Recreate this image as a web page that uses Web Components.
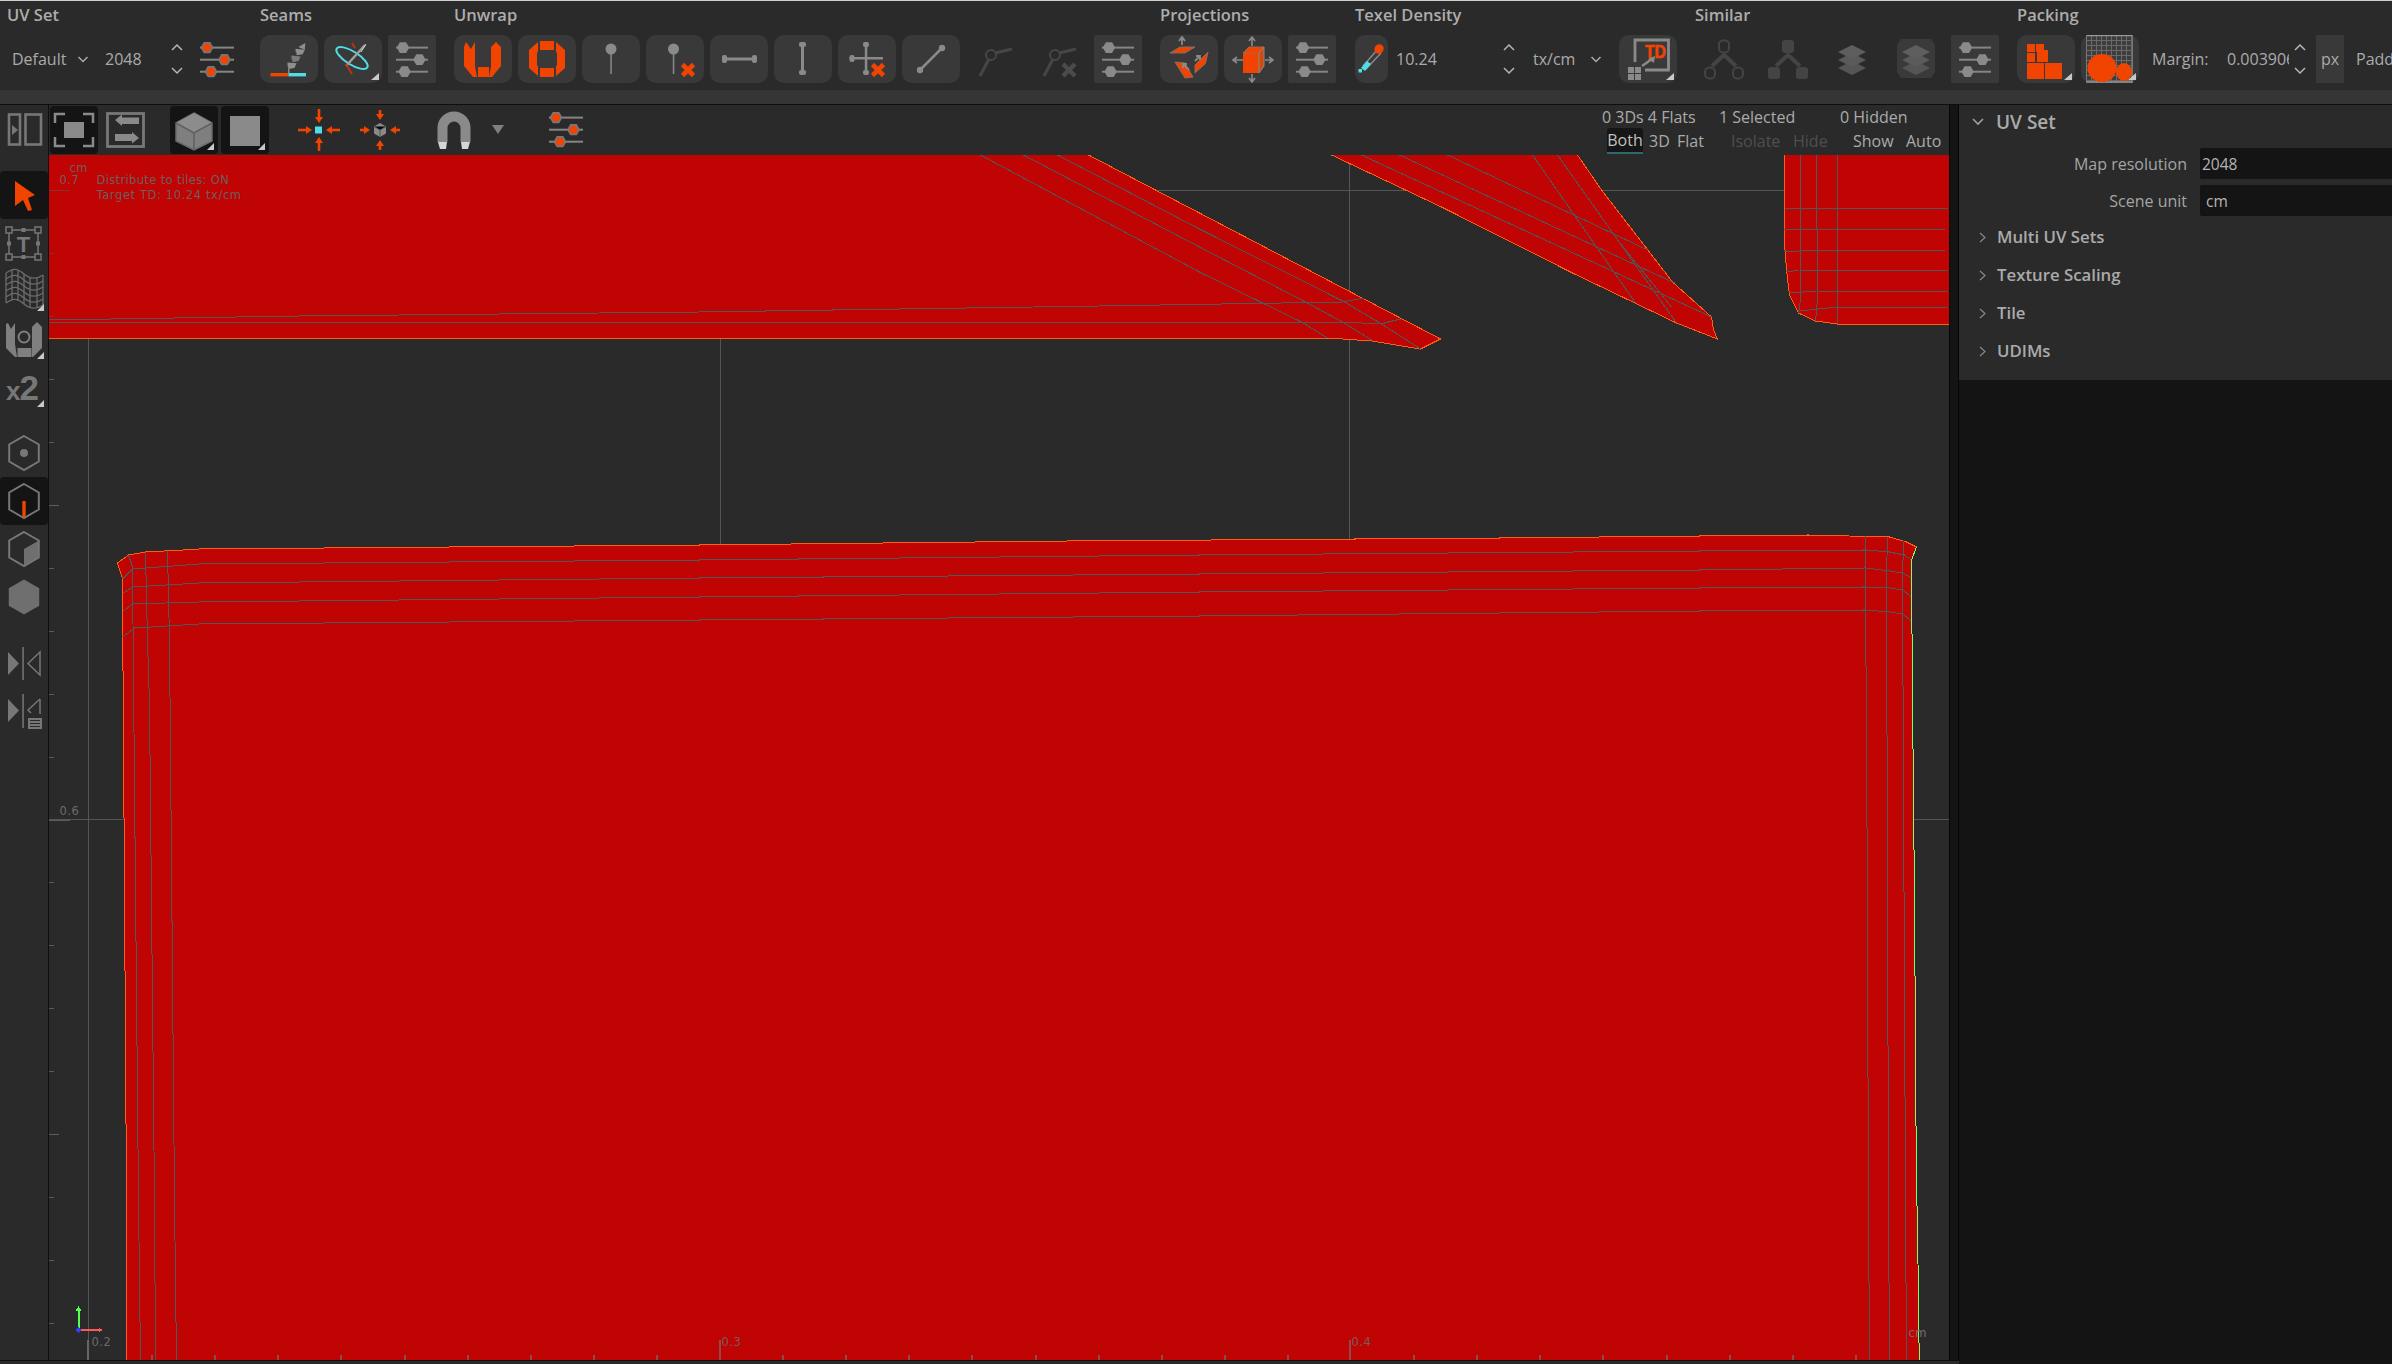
<!DOCTYPE html>
<html><head><meta charset="utf-8"><title>UV</title>
<style>
html,body{margin:0;padding:0;background:#2a2a2a;overflow:hidden;width:2392px;height:1364px}
body{font-family:"Open Sans","Liberation Sans",sans-serif;color:#aaa}
</style></head><body>
<uv-app></uv-app>
<script>
const G='#8a8a8a',O='#f04400',C='#4fdde8',D='#444',L='#777';
const hexFlat=(x,y,r,f)=>`<polygon points="${x-r},${y} ${x-r/2},${y-r*.87} ${x+r/2},${y-r*.87} ${x+r},${y} ${x+r/2},${y+r*.87} ${x-r/2},${y+r*.87}" fill="${f}"/>`;
const hexPt=(x,y,r,attrs)=>`<polygon points="${x},${y-r} ${x+r*.87},${y-r/2} ${x+r*.87},${y+r/2} ${x},${y+r} ${x-r*.87},${y+r/2} ${x-r*.87},${y-r/2}" ${attrs}/>`;
const lines=(x0=8,x1=40,c='#858585')=>[12.6,24.7,36.7].map(y=>`<rect x="${x0}" y="${y-1}" width="${x1-x0}" height="2" fill="${c}"/>`).join('');
const xMark=(x,y,s=6.5)=>`<path d="M${x-s} ${y-s}L${x+s} ${y+s}M${x+s} ${y-s}L${x-s} ${y+s}" stroke="${O}" stroke-width="4.6" fill="none"/>`;
const pinHead=(x,y)=>`<ellipse cx="${x}" cy="${y}" rx="5.5" ry="5.5" fill="${G}"/><rect x="${x-.7}" y="${y}" width="1.5" height="25" fill="${G}"/>`;
const dimLoop=(c)=>`<circle cx="25" cy="20" r="5" fill="none" stroke="${c}" stroke-width="2"/><path d="M23 24L14 41M29 18L46 14" stroke="${c}" stroke-width="3" fill="none"/>`;
const arrowSet=(cx,cy,far,near,c)=>{
 const a=(x1,y1,x2,y2)=>{const dx=Math.sign(x2-x1),dy=Math.sign(y2-y1);
  return `<path d="M${x1} ${y1}L${x2-dx*4} ${y2-dy*4}" stroke="${c}" stroke-width="2.6"/><polygon points="${x2},${y2} ${x2-dx*6-dy*4},${y2-dy*6-dx*4} ${x2-dx*6+dy*4},${y2-dy*6+dx*4}" fill="${c}"/>`};
 return a(cx,cy-far,cx,cy-near)+a(cx,cy+far,cx,cy+near)+a(cx-far,cy,cx-near,cy)+a(cx+far,cy,cx+near,cy)};
const ICONS={
 slidersO:`${lines(8,42)}${[[15,12.6],[32.5,24.7],[19,36.7]].map(([x,y])=>hexFlat(x,y,6.5,'#777')+`<circle cx="${x}" cy="${y}" r="4" fill="${O}"/>`).join('')}`,
 sliders:`${lines()}${hexFlat(15,12.6,6.2,G)}${hexFlat(31.4,24.7,6.2,G)}${hexFlat(16.6,36.7,6.2,G)}`,
 seam:`<rect x="10.500" y="38" width="18" height="3.400" fill="${O}"/><rect x="28.500" y="38" width="17.500" height="3.400" fill="${C}"/>
  <rect x="28" y="30" width="1.500" height="8" fill="#888"/>
  <g transform="translate(28.500 34) rotate(31)">${[0,-8,-16].map((d,i)=>`<polygon points="0,${d} 4.500,${d-4} 4,${d-9} -4.500,${d-5}" fill="${i%2?'#7a7a7a':'#8f8f8f'}"/><polygon points="0,${d} -4.500,${d-5} -4,${d-3} " fill="#5f5f5f"/>`).join('')}<polygon points="-3,-24 4,-25 1,-31" fill="#8f8f8f"/></g>`,
 cut:`<ellipse cx="28" cy="23" rx="18" ry="6.500" transform="rotate(32 28 23)" fill="none" stroke="${C}" stroke-width="2"/><path d="M41 10L22 31" stroke="#a0a0a0" stroke-width="2.400"/><path d="M42 9L37 17" stroke="#cfcfcf" stroke-width="1"/><path d="M28 8L31 13M22 29L28 39" stroke="#c63010" stroke-width="1.800"/>`,
 u:`<polygon points="10,12 12,7 17,14 21,7 21,31 23,42 19,42 10,31" fill="${O}"/><polygon points="37,12 42,7 47,12 47,31 38,42 35,42 37,31" fill="${O}"/><rect x="24" y="32" width="11" height="10" fill="${O}"/>`,
 o:`<rect x="22" y="6" width="14" height="9" fill="${O}"/><rect x="22" y="33" width="14" height="9" fill="${O}"/><polygon points="11,15 20,7 20,17 19,18 19,30 20,31 20,41 11,33" fill="${O}"/><polygon points="47,15 38,7 38,17 39,18 39,30 38,31 38,41 47,33" fill="${O}"/>`,
 pin:pinHead(29,14),
 pinx:pinHead(27.500,14)+xMark(42,35,5.5),
 edgeH:`<rect x="12" y="22.500" width="35" height="3" fill="${G}"/><rect x="12" y="20" width="5" height="8" rx="2" fill="${G}"/><rect x="42" y="20" width="5" height="8" rx="2" fill="${G}"/>`,
 edgeV:`<rect x="27" y="7" width="3" height="33" fill="${G}"/><rect x="25" y="7" width="7" height="5" rx="2" fill="${G}"/><rect x="25" y="35" width="7" height="5" rx="2" fill="${G}"/>`,
 cross:`<rect x="26.800" y="7" width="2.500" height="33" fill="${G}"/><rect x="11.500" y="22" width="33.500" height="2.500" fill="${G}"/><rect x="25" y="7" width="6" height="5" rx="2" fill="${G}"/><rect x="25" y="35" width="6" height="5" rx="2" fill="${G}"/><rect x="11.500" y="20" width="5" height="7" rx="2" fill="${G}"/>${xMark(40,35,5.5)}`,
 diag:`<path d="M18 35L40 13" stroke="${G}" stroke-width="2.500"/><circle cx="18" cy="35" r="3.200" fill="${G}"/><circle cx="40" cy="13" r="3.200" fill="${G}"/>`,
 dim1:dimLoop('#464646'),
 dim2:dimLoop('#464646')+`<path d="M33 29L45 41M45 29L33 41" stroke="#4b4b4b" stroke-width="4.500"/>`,
 tri:`<polygon points="10,18 20,12 35,12 25,18" fill="${O}" stroke="#8a6a60"/><polygon points="15,27 25,28 33,42 25,43" fill="${O}" stroke="#8a6a60"/><polygon points="35,30 48,17 45.500,28.500 35,38" fill="${O}" stroke="#8a6a60"/>
  <path d="M22 10V3M19 6L22 2L25 6" stroke="${G}" stroke-width="1.800" fill="none"/><path d="M29 35L23 29M23 33V29H27" stroke="${G}" stroke-width="1.800" fill="none"/><path d="M35 26L40 21M36 21H40V25" stroke="${G}" stroke-width="1.800" fill="none"/>`,
 box:`<rect x="19" y="18" width="16" height="20" fill="${O}"/><polygon points="19,18 25,12 40,12 35,18" fill="${O}" stroke="#a06a50"/><polygon points="35,18 40,12 40,31 35,38" fill="#d04a10" stroke="#8a8a8a"/>
  <path d="M28 11V3M25 6L28 2L31 6M28 39V46M25 43L28 47L31 43M19 25H10M13 22L9 25L13 28M41 25H48M45 22L49 25L45 28" stroke="${G}" stroke-width="1.600" fill="none"/>`,
 drop:`<path d="M8 31L23 14M11 34L26 18" stroke="#8a8a8a" stroke-width="1.500"/><polygon points="6,33 12,26 16,29 10,36" fill="${C}"/><rect x="3.500" y="34" width="3.500" height="3.500" fill="${C}"/><ellipse cx="24" cy="14" rx="4.500" ry="5" fill="${O}" transform="rotate(35 24 14)"/>`,
 td:`<path d="M16 27V5H49.500V35H26" fill="none" stroke="${G}" stroke-width="2.800"/><text x="26" y="23" font-family="Liberation Sans,sans-serif" font-weight="700" font-size="18" textLength="21" lengthAdjust="spacingAndGlyphs" fill="${O}" stroke="${O}" stroke-width=".6">TD</text>
  <path d="M23 31L33 24" stroke="${G}" stroke-width="2.400"/><polygon points="36,21 35,28 29,24" fill="${G}"/>
  <rect x="9" y="32" width="6" height="6" fill="${G}"/><rect x="16" y="32" width="6" height="6" fill="${G}"/><rect x="9" y="39" width="6" height="6" fill="${G}"/><rect x="16" y="39" width="6" height="6" fill="${G}"/>`,
 tree1:`<rect x="24" y="5.500" width="10" height="12" rx="4" fill="none" stroke="${D}" stroke-width="2"/><rect x="10" y="32.500" width="10" height="11" rx="4.500" fill="none" stroke="${D}" stroke-width="2"/><rect x="38" y="32.500" width="10" height="11" rx="4.500" fill="none" stroke="${D}" stroke-width="2"/><path d="M17 31L29 20L41 31" fill="none" stroke="${D}" stroke-width="4"/>`,
 tree2:`<rect x="23" y="5" width="12" height="13" rx="3" fill="${D}"/><rect x="9" y="32" width="12" height="12" rx="3" fill="${D}"/><rect x="37" y="32" width="12" height="12" rx="3" fill="${D}"/><path d="M17 31L29 20L41 31" fill="none" stroke="${D}" stroke-width="4"/>`,
 layers:`<polygon points="29,26 15,33 29,40 43,33" fill="#555"/><polygon points="29,18 15,25 29,32 43,25" fill="#5a5a5a"/><polygon points="29,10 15,17 29,24 43,17" fill="#5e5e5e"/>`,
 layersBox:`<polygon points="14,4 44,4 48,10 48,37 44,43 14,43 10,37 10,10" fill="#3a3a3a"/><polygon points="29,26 15,33 29,40 43,33" fill="#555"/><polygon points="29,18 15,25 29,32 43,25" fill="#5a5a5a"/><polygon points="29,10 15,17 29,24 43,17" fill="#5e5e5e"/>`,
 pack:`<rect x="10" y="9" width="8" height="8" fill="${O}"/><rect x="19" y="9" width="8" height="8" fill="${O}"/><rect x="10" y="18" width="8" height="9" fill="${O}"/><rect x="20" y="15" width="11" height="12" fill="${O}"/><rect x="10" y="28" width="17" height="16" fill="${O}"/><rect x="28" y="28" width="17" height="16" fill="${O}"/>`,
 pack2:`<rect x="5" y="0" width="47" height="48" fill="url(#gr)"/><path d="M5 .5H52M5 47H52" stroke="#999" stroke-width="1.500"/><path d="M5.500 0V48M51.500 0V48" stroke="#777"/><ellipse cx="21" cy="33" rx="14.500" ry="14" fill="${O}"/><ellipse cx="43" cy="37" rx="8" ry="9" fill="${O}"/>`,
 collapse:`<rect x="9" y="9.500" width="11" height="30" fill="none" stroke="${L}" stroke-width="2.600"/><rect x="25.500" y="9.500" width="15.500" height="30" fill="none" stroke="${L}" stroke-width="2.600"/><polygon points="12,20 18,25 12,30" fill="${L}"/>`,
 frame:`<path d="M5 17V8H15M33 8H43V17M43 31V40H33M15 40H5V31" fill="none" stroke="${G}" stroke-width="2.500"/><rect x="14" y="16" width="20" height="16" fill="${G}"/>`,
 swap:`<rect x="9.500" y="8.500" width="36" height="33" fill="none" stroke="${L}" stroke-width="2.800"/><polygon points="17,15 24,9.500 24,12.500 41,12.500 41,19 24,19 24,21" fill="${G}"/><polygon points="41,33 34,38.500 34,36 17,36 17,29 34,29 34,27" fill="${G}"/>`,
 cube:`<polygon points="24,7 42,17 42,35 24,44 6,35 6,17" fill="#7f7f7f" stroke="#6a6a6a" stroke-width="1.500"/><polygon points="24,7 42,17 24,27 6,17" fill="#8c8c8c"/><path d="M6 17L24 27L42 17M24 27V44" stroke="#5f5f5f" stroke-width="1.500" fill="none"/>`,
 square:`<rect x="9" y="10" width="30" height="30" fill="${G}"/>`,
 center1:`${arrowSet(24,25,21,7,O)}<rect x="20" y="21.500" width="7" height="7" fill="${C}"/>`,
 center2:`${arrowSet(24,25,20,10,O)}<polygon points="24,18 30,21.500 30,28.500 24,32 18,28.500 18,21.500" fill="${G}"/><path d="M18 21.500L24 25L30 21.500M24 25V32" stroke="#555"/>`,
 magnet:`<path d="M12.500 37V23A11.500 11.500 0 0 1 35.500 23V37" fill="none" stroke="${G}" stroke-width="10"/><polygon points="8,37 17,37 16,44 10,44" fill="#d6d6d6"/><polygon points="31,37 40,37 38,44 32,44" fill="#d6d6d6"/>`,
 arrow:`<polygon points="15,10 35,24 28,27 32,39 28,40 23,29 15,35" fill="${O}"/>`,
 tframe:`<rect x="9" y="11" width="29" height="27" fill="none" stroke="${L}" stroke-width="1.500"/>${[[9,11],[38,11],[9,38],[38,38]].map(([x,y])=>`<rect x="${x-3}" y="${y-3}" width="6" height="6" fill="#2a2a2a" stroke="${L}" stroke-width="1.500"/>`).join('')}${[[23.500,11],[23.500,38],[9,24.500],[38,24.500]].map(([x,y])=>`<rect x="${x-2}" y="${y-2}" width="4" height="4" fill="${L}"/>`).join('')}<text x="23.500" y="33" text-anchor="middle" font-family="Liberation Sans,sans-serif" font-weight="700" font-size="22" fill="${L}">T</text>`,
 wave:`<g fill="none" stroke="#6c6c6c" stroke-width="1.300">${[0,6,12,18,24,30].map(d=>`<path d="M6 ${6+d}C14 ${0+d} 18 ${2+d} 24 ${7+d}S36 ${13+d} 43 ${8+d}"/>`).join('')}${[[6,6,36],[12,3,33],[18,4,34],[24,7,37],[30,10,40],[37,11,41],[43,8,38]].map(([x,a,b])=>`<path d="M${x} ${a}V${b}"/>`).join('')}</g>`,
 uhole:`<g fill="#7f7f7f"><polygon points="6,9 8,8 11,14 15,8 15,29 17,42 15,42 6,33"/><polygon points="32,12 37,7 42,12 42,33 33,42 32,42 32,29"/><rect x="17.500" y="33" width="14" height="9"/></g><circle cx="24" cy="22" r="5.500" fill="none" stroke="#7f7f7f" stroke-width="2"/>`,
 x2:`<text x="6" y="37" font-family="Liberation Sans,sans-serif" font-weight="700" fill="${L}" font-size="26">x<tspan font-size="35" dx="-1">2</tspan></text>`,
 hexdot:hexPt(24,24,17,`fill="none" stroke="${L}" stroke-width="2"`)+`<circle cx="24" cy="24" r="4" fill="${L}"/>`,
 hexedge:hexPt(24,24,17,`fill="none" stroke="${L}" stroke-width="2"`)+`<rect x="22.300" y="24" width="3.400" height="16" fill="${O}"/>`,
 hexface:`<polygon points="24,24 39,15.500 39,32.500 24,41" fill="#6f6f6f"/>`+hexPt(24,24,17,`fill="none" stroke="${L}" stroke-width="2"`),
 hexfill:hexPt(24,24,17.500,`fill="#6f6f6f"`),
 mirror:`<polygon points="8,13 19,24.500 8,36" fill="${L}"/><rect x="22.300" y="8" width="1.500" height="33" fill="${L}"/><polygon points="40,13 28,24.500 40,36" fill="none" stroke="${L}" stroke-width="1.500"/>`,
 mirror2:`<polygon points="8,12 19,23.500 8,35" fill="${L}"/><rect x="22.300" y="7" width="1.500" height="34" fill="${L}"/><path d="M40 12L28 23L31 26M40 12V27" fill="none" stroke="${L}" stroke-width="1.500"/><rect x="28" y="31" width="14" height="11" fill="${L}"/><path d="M30 33.500H40M30 36.500H40M30 39.500H40" stroke="#2a2a2a"/>`
};
const DEFS=`<defs><pattern id="gr" width="5" height="5" patternUnits="userSpaceOnUse"><rect width="5" height="5" fill="#3d3d3d"/><path d="M0 .5H5M.5 0V5" stroke="#6a6a6a" stroke-width="1"/></pattern></defs>`;

class ToolBtn extends HTMLElement{
 connectedCallback(){
  const w=+(this.getAttribute('w')||58),h=+(this.getAttribute('h')||48),k=this.getAttribute('kind')||'round';
  const bg={round:'#393939',square:'#393939',flat:'transparent',dark:'#141414',railactive:'#141414'}[k];
  const r={round:'10px',square:'2px',flat:'0',dark:'4px',railactive:'4px'}[k];
  const m=this.getAttribute('mark');let mk='';
  if(m==='btn')mk=`<polygon points="${w-3},${h-10} ${w-3},${h-3} ${w-11},${h-3}" fill="#c8c8c8"/>`;
  if(m==='small')mk=`<polygon points="44,37 44,44 37,44" fill="#c8c8c8"/>`;
  this.attachShadow({mode:'open'}).innerHTML=`<style>:host{display:block;flex:none;width:${w}px;height:${h}px;background:${bg};border-radius:${r}}svg{display:block}</style>
  <svg width="${w}" height="${h}" viewBox="0 0 ${w} ${h}">${DEFS}${ICONS[this.getAttribute('icon')]||''}${mk}</svg>`;
 }
}
customElements.define('tool-btn',ToolBtn);

class ToolGroup extends HTMLElement{
 connectedCallback(){
  this.attachShadow({mode:'open'}).innerHTML=`<style>
  :host{display:flex;flex-direction:column;flex:none;margin-left:var(--ml,0)}
  .l{height:27px;font:600 16.500px/27px "Open Sans","Liberation Sans",sans-serif;color:#adadad;padding-left:var(--pl,0);white-space:nowrap;margin-bottom:7px}
  .r{display:flex;height:48px;gap:var(--gap,6px);align-items:center}
  </style><div class="l">${this.getAttribute('label')}</div><div class="r"><slot></slot></div>`;
 }
}
customElements.define('tool-group',ToolGroup);

class SpinBox extends HTMLElement{
 connectedCallback(){
  this.attachShadow({mode:'open'}).innerHTML=`<style>:host{display:block;flex:none;width:16px;height:48px}svg{display:block}</style>
  <svg width="16" height="48" viewBox="0 0 16 48"><path d="M3 15L8 10L13 15M3 33L8 38L13 33" fill="none" stroke="#b5b5b5" stroke-width="1.500"/></svg>`;
 }
}
customElements.define('spin-box',SpinBox);

class DropChev extends HTMLElement{
 connectedCallback(){
  this.attachShadow({mode:'open'}).innerHTML=`<style>:host{display:block;flex:none;width:14px;height:14px}svg{display:block}</style>
  <svg width="14" height="14" viewBox="0 0 14 14"><path d="M2.500 5L7 9.500L11.500 5" fill="none" stroke="#aaa" stroke-width="1.500"/></svg>`;
 }
}
customElements.define('drop-chev',DropChev);

class TxtBit extends HTMLElement{
 connectedCallback(){
  const w=this.getAttribute('w');
  this.attachShadow({mode:'open'}).innerHTML=`<style>:host{display:block;flex:none;${w?`width:${w}px;`:''}overflow:hidden;white-space:nowrap;font:400 16px/20px "Open Sans","Liberation Sans",sans-serif;color:var(--c,#aaa);text-align:var(--ta,left)}</style><slot></slot>`;
 }
}
customElements.define('txt-bit',TxtBit);

class TopBar extends HTMLElement{
 connectedCallback(){
  this.attachShadow({mode:'open'}).innerHTML=`<style>:host{display:flex;flex:none;height:90px;background:#2a2a2a;overflow:hidden;box-sizing:border-box;border-top:1px solid #cfcfcf}
  .sp{flex:none}</style>
  <tool-group label="UV Set" style="width:260px;--pl:7px;--gap:0">
   <div class="sp" style="width:12px"></div><txt-bit w="64">Default</txt-bit><drop-chev></drop-chev><div class="sp" style="width:15px"></div><txt-bit w="64">2048</txt-bit><spin-box></spin-box><div class="sp" style="width:7px"></div><tool-btn icon="slidersO" w="48" kind="flat"></tool-btn>
  </tool-group>
  <tool-group label="Seams">
   <tool-btn icon="seam"></tool-btn><tool-btn icon="cut" mark="btn"></tool-btn><tool-btn icon="sliders" w="48" kind="square"></tool-btn>
  </tool-group>
  <tool-group label="Unwrap" style="--ml:18px">
   <tool-btn icon="u"></tool-btn><tool-btn icon="o"></tool-btn><tool-btn icon="pin"></tool-btn><tool-btn icon="pinx"></tool-btn><tool-btn icon="edgeH"></tool-btn><tool-btn icon="edgeV"></tool-btn><tool-btn icon="cross"></tool-btn><tool-btn icon="diag"></tool-btn><tool-btn icon="dim1" kind="flat"></tool-btn><tool-btn icon="dim2" kind="flat"></tool-btn><tool-btn icon="sliders" w="48" kind="square"></tool-btn>
  </tool-group>
  <tool-group label="Projections" style="--ml:18px">
   <tool-btn icon="tri"></tool-btn><tool-btn icon="box"></tool-btn><tool-btn icon="sliders" w="48" kind="square"></tool-btn>
  </tool-group>
  <tool-group label="Texel Density" style="--ml:19px;--gap:0">
   <tool-btn icon="drop" w="33"></tool-btn><div class="sp" style="width:8px"></div><txt-bit w="105">10.24</txt-bit><spin-box></spin-box><div class="sp" style="width:16px"></div><txt-bit w="56">tx/cm</txt-bit><drop-chev></drop-chev><div class="sp" style="width:16px"></div><tool-btn icon="td" mark="btn"></tool-btn>
  </tool-group>
  <tool-group label="Similar" style="--ml:18px">
   <tool-btn icon="tree1" kind="flat"></tool-btn><tool-btn icon="tree2" kind="flat"></tool-btn><tool-btn icon="layers" kind="flat"></tool-btn><tool-btn icon="layersBox" kind="flat"></tool-btn><tool-btn icon="sliders" w="48" kind="square"></tool-btn>
  </tool-group>
  <tool-group label="Packing" style="--ml:18px;--gap:0">
   <tool-btn icon="pack" mark="btn"></tool-btn><div class="sp" style="width:6px"></div><tool-btn icon="pack2" mark="btn"></tool-btn>
   <div class="sp" style="width:13px"></div><txt-bit w="75">Margin:</txt-bit><txt-bit w="62">0.00390625</txt-bit><div class="sp" style="width:3px"></div><spin-box></spin-box>
   <div class="sp" style="width:8px"></div><div style="flex:none;width:28px;height:48px;background:#393939;display:flex;align-items:center;justify-content:center"><txt-bit>px</txt-bit></div><div class="sp" style="width:12px"></div><txt-bit w="60">Padding:</txt-bit>
  </tool-group>`;
 }
}
customElements.define('top-bar',TopBar);

class SideRail extends HTMLElement{
 connectedCallback(){
  this.attachShadow({mode:'open'}).innerHTML=`<style>:host{display:flex;flex-direction:column;flex:none;width:48px;background:#2a2a2a;border-right:1.500px solid #0e0e0e;box-sizing:content-box}
  .g{height:18px;flex:none}.t{height:16px;flex:none}</style>
  <tool-btn icon="collapse" w="48" h="50" kind="flat"></tool-btn><div class="t"></div>
  <tool-btn icon="arrow" w="48" kind="railactive"></tool-btn>
  <tool-btn icon="tframe" w="48" kind="flat"></tool-btn>
  <tool-btn icon="wave" w="48" kind="flat" mark="small"></tool-btn>
  <tool-btn icon="uhole" w="48" kind="flat" mark="small"></tool-btn>
  <tool-btn icon="x2" w="48" kind="flat" mark="small"></tool-btn><div class="g"></div>
  <tool-btn icon="hexdot" w="48" kind="flat"></tool-btn>
  <tool-btn icon="hexedge" w="48" kind="railactive"></tool-btn>
  <tool-btn icon="hexface" w="48" kind="flat"></tool-btn>
  <tool-btn icon="hexfill" w="48" kind="flat"></tool-btn><div class="g"></div>
  <tool-btn icon="mirror" w="48" kind="flat"></tool-btn>
  <tool-btn icon="mirror2" w="48" kind="flat"></tool-btn>`;
 }
}
customElements.define('side-rail',SideRail);

class ViewBar extends HTMLElement{
 connectedCallback(){
  this.attachShadow({mode:'open'}).innerHTML=`<style>:host{display:flex;flex:none;height:50px;align-items:center;background:#2a2a2a;--c:#aaa}
  .sp{flex:none}.st{margin-left:auto;width:347px;flex:none;display:flex;flex-direction:column;height:50px;box-sizing:border-box}
  .row{display:flex;height:24px;align-items:center;flex:none}
  .r1{height:23px}.r2{height:26px;--c:#aaa}.dim{--c:#4f4f4f}
  .both{width:36px;margin-left:5px;margin-right:6px;background:#161616;height:26px;border-radius:3px 3px 0 0;display:flex;align-items:center;justify-content:center;flex:none;--c:#c0c0c0;box-sizing:border-box;border-bottom:2px solid #2c6a6e}
  </style>
  <div class="sp" style="width:1px"></div><tool-btn icon="frame" w="48" kind="dark"></tool-btn>
  <tool-btn icon="swap" w="54" h="50" kind="flat"></tool-btn><div class="sp" style="width:18px"></div>
  <tool-btn icon="cube" w="48" kind="dark" mark="small"></tool-btn><div class="sp" style="width:3px"></div>
  <tool-btn icon="square" w="48" kind="dark" mark="small"></tool-btn><div class="sp" style="width:26px"></div>
  <tool-btn icon="center1" w="48" h="50" kind="flat"></tool-btn><div class="sp" style="width:13px"></div>
  <tool-btn icon="center2" w="48" h="50" kind="flat"></tool-btn><div class="sp" style="width:26px"></div>
  <tool-btn icon="magnet" w="48" h="50" kind="flat"></tool-btn><div class="sp" style="width:14px"></div>
  <svg width="12" height="10" style="flex:none;display:block"><polygon points="0,0 12,0 6,9" fill="#808080"/></svg><div class="sp" style="width:37px"></div>
  <tool-btn icon="slidersO" w="48" h="50" kind="flat"></tool-btn>
  <div class="st">
   <div class="row r1"><txt-bit w="117">0 3Ds 4 Flats</txt-bit><txt-bit w="121">1 Selected</txt-bit><txt-bit>0 Hidden</txt-bit></div>
   <div class="row r2"><div class="both"><txt-bit>Both</txt-bit></div><txt-bit w="28">3D</txt-bit><txt-bit w="54">Flat</txt-bit><txt-bit w="62" class="dim">Isolate</txt-bit><txt-bit w="60" class="dim">Hide</txt-bit><txt-bit w="53">Show</txt-bit><txt-bit>Auto</txt-bit></div>
  </div>`;
 }
}
customElements.define('view-bar',ViewBar);

class UvCanvas extends HTMLElement{
 connectedCallback(){
  const poly=(p)=>`<polyline points="${p}"/>`;
  const A='40,150 1079,150 1089,155 1441,339 1421,349 1372,341 1343,339 40,338';
  const B='1325,150 1575,150 1578,155 1602,190 1673,282 1712,317 1714,330 1718,339 1677,323 1573,273 1442,207 1332,155';
  const Cc='1785,150 1965,150 1965,324 1838,324 1816,321 1799,313 1790,295 1787,270 1785,243';
  const Dtop='127,1370 127,1200 124,740 124,700 123,640 123,579 118,563 129,555 146,552 184,550 200,549 700,545 1068,541 1500,538 1700,536 1809,535 1890,537 1907,542 1917,547';
  const Dright='1917,547 1912,560 1912,570 1913,697 1915,900 1917,1200 1918,1211 1919,1314 1920,1370';
  const inner=[
  '1058,155 1200,229 1345,302 1382,324 1421,349','1024,155 1200,247 1306,302 1343,322 1372,340','981,155 1200,272 1261,302 1302,322 1328,338',
  '49,320 300,316 700,312 1100,306 1343,302 1365,298','49,322 1343,322 1381,324 1401,319',
  '1362,155 1712,317','1400,155 1675,283','1448,155 1646,249','1533,155 1636,303','1558,155 1677,323','1618,240 1672,307',
  '1801,155 1801,300 1799,313','1817,155 1818,300 1816,321','1838,155 1838,324','1785,208 1948,208','1785,230 1948,229','1785,252 1800,251 1948,250','1787,272 1800,270 1948,270','1790,293 1817,291 1948,291','1800,311 1838,307 1948,307',
  '123,579 133,569 200,564 700,560 1200,555 1700,551 1866,550 1890,552 1905,555 1912,560',
  '124,593 133,587 200,583 700,578 1200,574 1700,570 1866,568 1890,571 1903,573 1912,578',
  '124,611 133,604 200,602 700,597 1200,592 1700,588 1866,587 1890,588 1903,590 1912,597',
  '123,637 135,628 200,624 700,620 1200,616 1700,611 1866,610 1890,612 1903,614 1912,621',
  '129,555 133,567 134,680 139,1200 141,1361','146,552 148,640 150,705 155,1200 156,1361','168,551 170,640 175,1200 177,1361',
  '1866,536 1866,630 1867,700 1869,1200 1870,1361','1888,537 1887,575 1889,1200 1890,1361','1904,541 1903,580 1906,1200 1907,1361'];
  let ticks='';
  for(let i=0;i<19;i++){const y=Math.round(190+i*62.95);const major=(i%10==0),mid=(i%5==0);
    ticks+=`<rect x="49" y="${y}" width="${major?21:mid?10:5}" height="1" fill="${y<339?'#8a3030':'#5c5c5c'}"/>`;}
  for(let i=1;i<29;i++){const x=Math.round(88+i*63.1);if(i%10==0)continue;
    ticks+=`<rect x="${x}" y="1355" width="2" height="5" fill="${x<127||x>1920?'#585858':'#8f4a4a'}"/>`;}
  const mono='font-family="DejaVu Sans,sans-serif" font-size="11.500" letter-spacing=".5"';
  this.attachShadow({mode:'open'}).innerHTML=`<style>:host{display:block;flex:1;position:relative;overflow:hidden;background:#2a2a2a}svg{position:absolute;left:0;top:0;display:block}</style>
  <svg width="1900" height="1205" viewBox="49.500 155 1900 1205" shape-rendering="crispEdges">
   <g fill="#555"><rect x="88" y="155" width="1" height="1205"/><rect x="720" y="155" width="1" height="1205"/><rect x="1349" y="155" width="1" height="1205"/><rect x="49" y="190" width="1900" height="1"/><rect x="49" y="819" width="1900" height="1"/></g>
   <g fill="#c00404" stroke="#ff5c14" stroke-width="1">
    <polygon points="${A}"/><polygon points="${B}"/><polygon points="${Cc}"/>
    <polygon stroke="none" points="${Dtop} ${Dright}"/>
    <polyline fill="none" points="${Dtop}"/>
   </g>
   <g fill="none" stroke="#4f5858" stroke-width="1">${inner.map(poly).join('')}</g>
   <polyline points="${Dright}" fill="none" stroke="#7dff6a" stroke-width="1"/>
   ${ticks}
   <rect x="87" y="1340" width="2" height="20" fill="#666"/><rect x="719" y="1340" width="2" height="20" fill="#8f4a4a"/><rect x="1349" y="1340" width="2" height="20" fill="#8f4a4a"/>
   <g shape-rendering="auto" ${mono}>
    <text x="70" y="172" fill="#6e5e5e">cm</text><text x="60" y="184" fill="#6e5e5e">0.7</text>
    <text x="97" y="184" fill="#6e5e5e" letter-spacing=".35">Distribute to tiles: ON</text><text x="97" y="199" fill="#6e5e5e" letter-spacing=".6">Target TD: 10.24 tx/cm</text>
    <text x="60" y="815" fill="#6a6a6a">0.6</text><text x="92" y="1346" fill="#6a6a6a">0.2</text>
    <text x="722" y="1346" fill="#7a5c5c">0.3</text><text x="1352" y="1346" fill="#7a5c5c">0.4</text><text x="1909" y="1337" fill="#7a6a6a">cm</text>
   </g>
   <rect x="78" y="1310" width="2" height="20" fill="#55ff55"/><polygon points="79,1306 76,1311 82,1311" fill="#55ff55"/>
   <rect x="80" y="1329" width="20" height="2" fill="#ff5a5a"/><polygon points="103,1330 99,1327 99,1333" fill="#ff5a5a"/>
   <polygon points="78.500,1327 81.500,1330 78.500,1333 75.500,1330" fill="#3a3aff"/>
  </svg>`;
 }
}
customElements.define('uv-canvas',UvCanvas);

class PropRow extends HTMLElement{
 connectedCallback(){
  const v=this.getAttribute('value'),pad=this.getAttribute('pad')||'2';
  this.attachShadow({mode:'open'}).innerHTML=`<style>:host{display:flex;flex:none;height:31px;align-items:center;margin-bottom:6px}
  .l{width:228px;text-align:right;font:400 16px/33px "Open Sans","Liberation Sans",sans-serif;color:#a5a5a5;flex:none;margin-right:13px;white-space:nowrap;height:31px}
  .i{flex:1;height:31px;background:#141414;color:#b5b5b5;font:400 15.500px/33px "Open Sans","Liberation Sans",sans-serif;padding-left:${pad}px;border-radius:2px 0 0 2px}
  </style><div class="l">${this.getAttribute('label')}</div><div class="i">${v}</div>`;
 }
}
customElements.define('prop-row',PropRow);

class PropHead extends HTMLElement{
 connectedCallback(){
  const open=this.hasAttribute('open');
  this.attachShadow({mode:'open'}).innerHTML=`<style>:host{display:flex;flex:none;height:${open?34:38}px;align-items:center}
  svg{flex:none;display:block}
  .t{font:600 ${open?19:16.800}px/20px "Open Sans","Liberation Sans",sans-serif;color:#aaa;white-space:nowrap;margin-left:${open?8:10}px}</style>
  ${open?`<svg style="margin-left:11px" width="18" height="14" viewBox="0 0 18 14"><path d="M3 4L8 9L13 4" fill="none" stroke="#a0a0a0" stroke-width="1.600"/></svg>`
  :`<svg style="margin-left:19px" width="9" height="14" viewBox="0 0 9 14"><path d="M2 3L7 7.500L2 12" fill="none" stroke="#888" stroke-width="1.200"/></svg>`}
  <div class="t">${this.getAttribute('label')}</div>`;
 }
}
customElements.define('prop-head',PropHead);

class PropPanel extends HTMLElement{
 connectedCallback(){
  this.attachShadow({mode:'open'}).innerHTML=`<style>:host{display:block;flex:1;background:#141414;overflow:hidden;min-width:0}
  .card{background:#2a2a2a;height:275px;display:flex;flex-direction:column;box-sizing:border-box}
  .rows{padding-top:9px;margin-bottom:-4px}</style>
  <div class="card"><prop-head open label="UV Set"></prop-head>
  <div class="rows"><prop-row label="Map resolution" value="2048"></prop-row><prop-row label="Scene unit" value="cm" pad="6"></prop-row></div>
  <prop-head label="Multi UV Sets"></prop-head><prop-head label="Texture Scaling"></prop-head><prop-head label="Tile"></prop-head><prop-head label="UDIMs"></prop-head></div>`;
 }
}
customElements.define('prop-panel',PropPanel);

class UvApp extends HTMLElement{
 connectedCallback(){
  this.attachShadow({mode:'open'}).innerHTML=`<style>:host{display:flex;flex-direction:column;width:2392px;height:1364px;background:#2a2a2a;overflow:hidden}
  .strip{flex:none;height:14px;background:#353535;border-bottom:1px solid #0e0e0e}
  .main{flex:1;display:flex;min-height:0}
  .left{flex:none;width:1959px;display:flex;flex-direction:column}
  .work{flex:1;display:flex;min-height:0}
  .view{flex:1;display:flex;flex-direction:column;min-width:0}
  .split{flex:none;width:8px;background:#141414;border-left:1px solid #060606;border-right:1px solid #060606}
  .foot{flex:none;height:3px;background:#2a2a2a;border-top:1px solid #0e0e0e}</style>
  <top-bar></top-bar><div class="strip"></div>
  <div class="main"><div class="left"><div class="work"><side-rail></side-rail><div class="view"><view-bar></view-bar><uv-canvas></uv-canvas></div><div class="split"></div></div><div class="foot"></div></div><prop-panel></prop-panel></div>`;
 }
}
customElements.define('uv-app',UvApp);
</script>
</body></html>
